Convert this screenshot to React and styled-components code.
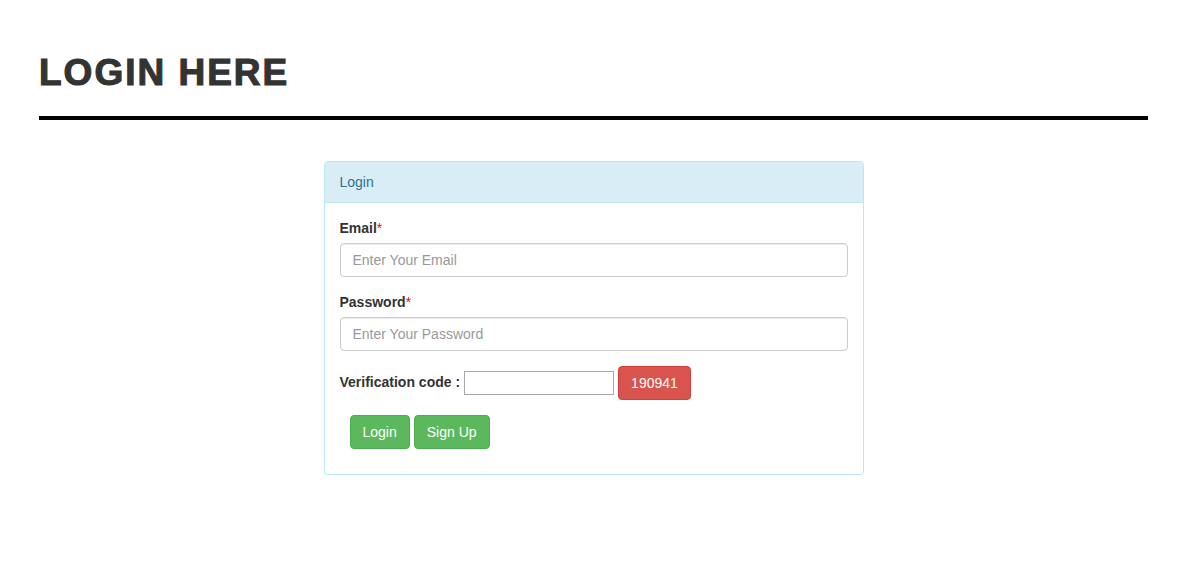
import React from "react"
import styled, { createGlobalStyle } from "styled-components"

const GlobalStyle = createGlobalStyle`
  * {
    box-sizing: border-box;
  }
  body {
    margin: 0;
    background: #fff;
    font-family: "Liberation Sans", Arial, sans-serif;
    font-size: 14px;
    line-height: 1.42857;
    color: #333;
  }
`

const Page = styled.div`
  padding: 0 39px;
`

const Title = styled.h1`
  margin: 0;
  padding-top: 53px;
  height: 116px;
  font-size: 37px;
  line-height: 40px;
  font-weight: 900;
  letter-spacing: 2px;
  color: #333;
  -webkit-text-stroke: 1.1px #333;
`

const Rule = styled.hr`
  margin: 0;
  height: 4px;
  border: 0;
  background: #000;
`

const Panel = styled.div`
  width: 540px;
  margin: 41px auto 0;
  border: 1px solid #bce8f1;
  border-radius: 4px;
  box-shadow: 0 1px 1px rgba(0, 0, 0, 0.05);
`

const PanelHeading = styled.div`
  padding: 11px 15px 9px;
  background: #d9edf7;
  color: #31708f;
  border-bottom: 1px solid #bce8f1;
  border-radius: 3px 3px 0 0;
`

const PanelBody = styled.div`
  padding: 15px;
`

const FormGroup = styled.div`
  margin-bottom: 15px;
`

const Label = styled.label`
  display: block;
  padding-top: 1px;
  margin-bottom: 4px;
  font-weight: bold;
`

const Required = styled.span`
  color: red;
  font-weight: normal;
`

const Input = styled.input`
  display: block;
  width: 100%;
  height: 34px;
  padding: 6px 12px;
  font-family: inherit;
  font-size: 14px;
  color: #555;
  border: 1px solid #ccc;
  border-radius: 4px;
  box-shadow: inset 0 1px 1px rgba(0, 0, 0, 0.075);
  &::placeholder {
    color: #999;
  }
`

const CodeRow = styled.div`
  display: flex;
  align-items: center;
  margin-bottom: 15px;
`

const CodeLabel = styled.label`
  font-weight: bold;
  margin-right: 4px;
`

const CodeInput = styled.input`
  width: 150px;
  height: 24px;
  padding: 1px 2px;
  font-family: inherit;
  font-size: 14px;
  border: 1px solid #a9a9a9;
  border-radius: 0;
  margin-right: 4px;
`

const Button = styled.button`
  height: 34px;
  padding: 7px 12px 5px;
  font-family: inherit;
  font-size: 14px;
  line-height: 1.42857;
  color: #fff;
  background: ${(p) => (p.$danger ? "#d9534f" : "#5cb85c")};
  border: 1px solid ${(p) => (p.$danger ? "#d43f3a" : "#4cae4c")};
  border-radius: 4px;
  cursor: pointer;
`

const Actions = styled.div`
  display: flex;
  gap: 4px;
  margin: 0 0 10px 10px;
`

const App = () => (
  <>
    <GlobalStyle />
    <Page>
      <Title>LOGIN HERE</Title>
      <Rule />
      <Panel>
        <PanelHeading>Login</PanelHeading>
        <PanelBody>
          <FormGroup>
            <Label>
              Email<Required>*</Required>
            </Label>
            <Input type="email" placeholder="Enter Your Email" />
          </FormGroup>
          <FormGroup>
            <Label>
              Password<Required>*</Required>
            </Label>
            <Input type="password" placeholder="Enter Your Password" />
          </FormGroup>
          <CodeRow>
            <CodeLabel>Verification code :</CodeLabel>
            <CodeInput type="text" />
            <Button type="button" $danger>
              190941
            </Button>
          </CodeRow>
          <Actions>
            <Button type="submit">Login</Button>
            <Button type="button">Sign Up</Button>
          </Actions>
        </PanelBody>
      </Panel>
    </Page>
  </>
)

export default App
